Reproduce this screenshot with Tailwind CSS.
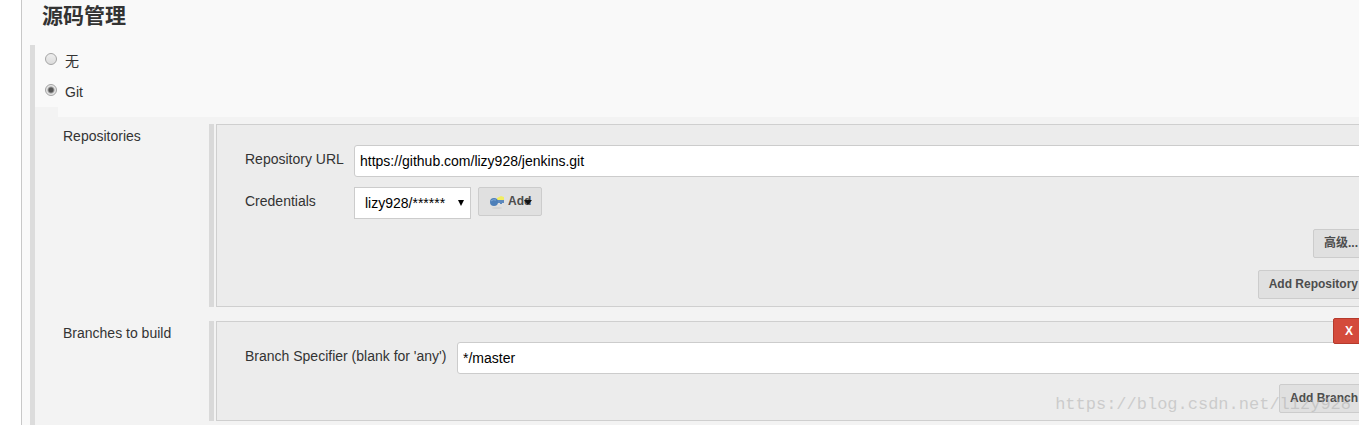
<!DOCTYPE html>
<html lang="zh">
<head>
    <meta charset="UTF-8">
    <meta name="viewport" content="width=device-width, initial-scale=1.0">
    <title>源码管理</title>
    <script src="https://cdn.jsdelivr.net/npm/@tailwindcss/browser@4"></script>
</head>
<body class="bg-white text-[#333] text-sm leading-5 font-['Liberation_Sans','Noto_Sans_CJK_SC',sans-serif] overflow-hidden">
    <main class="relative ml-[21px] min-h-screen border-l border-[#c8c8c8] bg-[#f9f9f9] pl-2">
        <h1 class="h-[45px] pl-3 text-[21px] leading-8 font-bold">源码管理</h1>

        <form class="border-l-5 border-[#dcdcdc]">
            <!-- SCM type -->
            <label class="flex h-[31px] gap-2 pl-[10px] pt-2">
                <input type="radio" name="scm" value="none" class="appearance-none size-3 shrink-0 rounded-full border border-[#a5a5a5] bg-linear-to-b from-[#eee] to-[#dcdcdc]">
                <span class="leading-4">无</span>
            </label>
            <label class="flex h-[31px] gap-2 pl-[10px] pt-2">
                <input type="radio" name="scm" value="git" checked class="appearance-none size-3 shrink-0 rounded-full border border-[#a5a5a5] bg-[#e4e4e4] checked:bg-[radial-gradient(circle,#555_2px,#e4e4e4_4px)]">
                <span class="leading-4">Git</span>
            </label>

            <!-- Git settings, the panels run past the right edge -->
            <div class="h-[10px] w-[23px] bg-[#f3f3f3]"></div>
            <div class="-mr-6 min-h-[308px] space-y-[14px] bg-[#f3f3f3] pl-7 pt-[7px]">
                <section class="flex">
                    <h2 class="w-[146px] shrink-0 pt-[2px]">Repositories</h2>
                    <div class="mr-[2px] w-[5px] shrink-0 bg-[#d9d9d9]"></div>
                    <div class="grow border border-[#cfcfcf] bg-[#ececec] pb-[7px] pl-7 pt-5">
                        <div class="flex">
                            <label for="url" class="w-[109px] shrink-0 pt-1">Repository URL</label>
                            <input id="url" type="text" value="https://github.com/lizy928/jenkins.git" class="h-8 grow rounded-[3px] border border-[#ccc] bg-white px-[5px] text-black">
                        </div>
                        <div class="mt-[10px] flex">
                            <label for="credentials" class="w-[109px] shrink-0 pt-1">Credentials</label>
                            <div class="relative">
                                <select id="credentials" class="h-8 w-[117px] appearance-none border border-[#ccc] bg-white pl-[10px] text-black">
                                    <option>lizy928/******</option>
                                </select>
                                <svg class="pointer-events-none absolute right-[7px] top-[13px]" width="6" height="6" viewBox="0 0 6 6"><path d="M0 0h6L3 6z" fill="#000"/></svg>
                            </div>
                            <button type="button" class="relative ml-[7px] flex h-[29px] w-16 items-center gap-[3px] rounded-xs border border-[#ccc] bg-[#e0e0e0] pb-[2px] pl-[10px] text-xs font-bold text-[#4d4d4d]">
                                <svg width="16" height="16" viewBox="0 0 16 16">
                                    <ellipse cx="8" cy="15" rx="5" ry="1" fill="#d3d3d3"/>
                                    <path d="M8 5l4-2 3 1v3H8z" fill="#f1ed62"/>
                                    <path d="M7 7h8v3h-2v1h-2v-1H7z" fill="#5c88bd"/>
                                    <ellipse cx="5" cy="9" rx="4" ry="4" fill="#4d7fb9"/>
                                    <path d="M2 8q2-2 5-1" stroke="#82a9d4" fill="none"/>
                                </svg>
                                <span>Add</span>
                                <svg class="absolute right-[9px] top-[11px]" width="8" height="6" viewBox="0 0 8 6"><path d="M0 1h8L4 6z" fill="#111"/></svg>
                            </button>
                        </div>
                        <div class="mt-[10px] flex flex-col items-end gap-3 pr-[13px]">
                            <button type="button" class="h-[29px] rounded-xs border border-[#ccc] bg-[#e0e0e0] px-[10px] pb-[2px] text-xs font-bold text-[#4d4d4d]">高级...</button>
                            <button type="button" class="h-[29px] rounded-xs border border-[#ccc] bg-[#e0e0e0] px-[10px] pb-[2px] text-xs font-bold text-[#4d4d4d]">Add Repository</button>
                        </div>
                    </div>
                </section>

                <section class="flex">
                    <h2 class="w-[146px] shrink-0 pt-[2px]">Branches to build</h2>
                    <div class="mr-[2px] w-[5px] shrink-0 bg-[#d9d9d9]"></div>
                    <div class="relative grow border border-[#cfcfcf] bg-[#ececec] pb-[7px] pl-7 pt-5">
                        <button type="button" class="absolute -top-1 right-[17px] h-[26px] w-8 rounded-xs border border-[#b53a2c] bg-[#d44b3c] text-xs font-bold text-white">X</button>
                        <div class="flex">
                            <label for="branch" class="w-[212px] shrink-0 pt-1">Branch Specifier (blank for 'any')</label>
                            <input id="branch" type="text" value="*/master" class="h-8 grow rounded-[3px] border border-[#ccc] bg-white px-[5px] text-black">
                        </div>
                        <div class="mt-[10px] flex justify-end pr-[13px]">
                            <button type="button" class="h-[29px] rounded-xs border border-[#ccc] bg-[#e0e0e0] px-[10px] pb-[2px] text-xs font-bold text-[#4d4d4d]">Add Branch</button>
                        </div>
                    </div>
                </section>
            </div>
        </form>

        <p class="pointer-events-none absolute bottom-[10px] right-2 font-['Liberation_Mono',monospace] text-[17px] text-[#aaa]/50">https://blog.csdn.net/lizy928</p>
    </main>
</body>
</html>
